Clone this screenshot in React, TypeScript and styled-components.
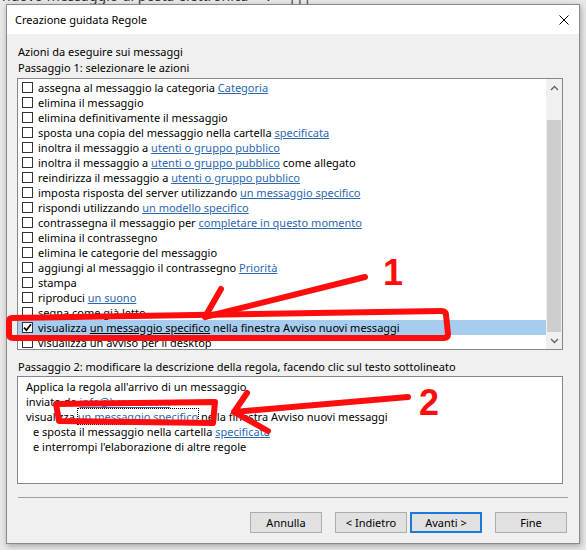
import React from 'react';
import styled, { createGlobalStyle } from 'styled-components';

type Part = string | { link: string };

interface Action {
  parts: Part[];
  checked?: boolean;
  selected?: boolean;
}

const actions: Action[] = [
  { parts: ['assegna al messaggio la categoria ', { link: 'Categoria' }] },
  { parts: ['elimina il messaggio'] },
  { parts: ['elimina definitivamente il messaggio'] },
  { parts: ['sposta una copia del messaggio nella cartella ', { link: 'specificata' }] },
  { parts: ['inoltra il messaggio a ', { link: 'utenti o gruppo pubblico' }] },
  { parts: ['inoltra il messaggio a ', { link: 'utenti o gruppo pubblico' }, ' come allegato'] },
  { parts: ['reindirizza il messaggio a ', { link: 'utenti o gruppo pubblico' }] },
  { parts: ['imposta risposta del server utilizzando ', { link: 'un messaggio specifico' }] },
  { parts: ['rispondi utilizzando ', { link: 'un modello specifico' }] },
  { parts: ['contrassegna il messaggio per ', { link: 'completare in questo momento' }] },
  { parts: ['elimina il contrassegno'] },
  { parts: ['elimina le categorie del messaggio'] },
  { parts: ['aggiungi al messaggio il contrassegno ', { link: 'Priorità' }] },
  { parts: ['stampa'] },
  { parts: ['riproduci ', { link: 'un suono' }] },
  { parts: ['segna come già letto'] },
  {
    parts: ['visualizza ', { link: 'un messaggio specifico' }, ' nella finestra Avviso nuovi messaggi'],
    checked: true,
    selected: true,
  },
  { parts: ['visualizza un avviso per il desktop'] },
];

const GlobalStyle = createGlobalStyle`
  html, body {
    margin: 0;
    padding: 0;
  }
  body {
    font-family: 'Noto Sans', 'DejaVu Sans', sans-serif;
    font-size: 11px;
    color: #000;
  }
`;

const Check = () => (
  <svg width="9" height="9" viewBox="0 0 9 9">
    <path d="M1 4.6 L3.4 7.2 L8 1.2" fill="none" stroke="#000" strokeWidth="1.7" />
  </svg>
);

const Chevron = ({ down }: { down?: boolean }) => (
  <svg width="9" height="6" viewBox="0 0 9 6">
    <path
      d={down ? 'M1 1 L4.5 4.5 L8 1' : 'M1 5 L4.5 1.5 L8 5'}
      fill="none"
      stroke="#606060"
      strokeWidth="1.3"
    />
  </svg>
);

const renderParts = (parts: Part[], plain?: boolean) =>
  parts.map((p, i) =>
    typeof p === 'string' ? (
      <React.Fragment key={i}>{p}</React.Fragment>
    ) : (
      <Link key={i} $plain={plain}>
        {p.link}
      </Link>
    ),
  );

export default function App() {
  return (
    <>
      <GlobalStyle />
      <Desktop>
        <Ribbon>
          <RibbonText>nuovo messaggio di posta elettronica</RibbonText>
          <RibbonText>⌄</RibbonText>
          <RibbonText>|||</RibbonText>
        </Ribbon>
        <WindowArea>
          <Dialog>
            <TitleBar>
              <Title>Creazione guidata Regole</Title>
              <svg width="10" height="10" viewBox="0 0 10 10">
                <path d="M0.5 0.5 L9.5 9.5 M9.5 0.5 L0.5 9.5" stroke="#000" strokeWidth="1" />
              </svg>
            </TitleBar>
            <Body>
              <Label>Azioni da eseguire sui messaggi</Label>
              <Label>Passaggio 1: selezionare le azioni</Label>
              <ListBox>
                <Rows>
                  {actions.map((a, i) => (
                    <Row key={i} $selected={a.selected}>
                      <Checkbox>{a.checked && <Check />}</Checkbox>
                      <RowText>{renderParts(a.parts, a.selected)}</RowText>
                    </Row>
                  ))}
                </Rows>
                <ScrollBar>
                  <ScrollArrow>
                    <Chevron />
                  </ScrollArrow>
                  <Track>
                    <Thumb />
                  </Track>
                  <ScrollArrow>
                    <Chevron down />
                  </ScrollArrow>
                </ScrollBar>
              </ListBox>
              <StepLabel>
                Passaggio 2: modificare la descrizione della regola, facendo clic sul testo sottolineato
              </StepLabel>
              <DescBox>
                <DescLine>Applica la regola all'arrivo di un messaggio</DescLine>
                <DescLine>
                  inviato da <Link>info@braosa.com</Link>
                </DescLine>
                <DescLine>
                  visualizza <FocusLink>un messaggio specifico</FocusLink> nella finestra Avviso nuovi messaggi
                </DescLine>
                <DescLine $indent>
                  e sposta il messaggio nella cartella <Link>specificata</Link>
                </DescLine>
                <DescLine $indent>e interrompi l'elaborazione di altre regole</DescLine>
              </DescBox>
              <Separator />
              <ButtonRow>
                <Button>Annulla</Button>
                <Button $gap={13}>&lt; Indietro</Button>
                <Button $gap={3} $focused>
                  Avanti &gt;
                </Button>
                <Button $gap={13}>Fine</Button>
              </ButtonRow>
            </Body>
          </Dialog>
        </WindowArea>
        <Annotations width="586" height="550" viewBox="0 0 586 550">
          <g fill="none" stroke="#ff0d0d" strokeWidth="6" strokeLinecap="round" strokeLinejoin="round">
            <path d="M12 318 L441 311 Q446 311 446 315 L448 334 Q448 338 444 338 L13 338 Q9 338 9 334 L9 322 Q9 318 12 318" />
            <path d="M365 277 L205 317 M205 317 L221 289" />
            <path d="M56 404 L215 402 L213 423 L59 421 Z" />
            <path d="M408 397 L234 412 M234 412 L247 393 M234 412 L268 431" />
          </g>
          <NumberMark x="383" y="285">1</NumberMark>
          <NumberMark x="419" y="415">2</NumberMark>
        </Annotations>
      </Desktop>
    </>
  );
}

const Desktop = styled.div`
  position: relative;
  width: 586px;
  height: 550px;
  overflow: hidden;
  background: #e8e8e8;
  display: flex;
  flex-direction: column;
`;

const Ribbon = styled.div`
  height: 4px;
  overflow: hidden;
  display: flex;
  gap: 14px;
  padding-left: 2px;
`;

const RibbonText = styled.span`
  margin-top: -12px;
  font-size: 14px;
  line-height: 16px;
  color: #333;
  white-space: nowrap;
`;

const WindowArea = styled.div`
  flex: 1;
  padding-left: 6px;
`;

const Dialog = styled.div`
  width: 574px;
  height: 540px;
  box-sizing: border-box;
  border: 1px solid #8a8a8a;
  background: #f0f0f0;
  display: flex;
  flex-direction: column;
  box-shadow: 1px 2px 6px rgba(0, 0, 0, 0.3);
`;

const TitleBar = styled.div`
  height: 29px;
  background: #fff;
  display: flex;
  align-items: center;
  justify-content: space-between;
  padding: 0 10px 0 8px;
`;

const Title = styled.span`
  font-size: 11px;
`;

const Body = styled.div`
  flex: 1;
  padding: 10px 0 0 10px;
  display: flex;
  flex-direction: column;
`;

const Label = styled.div`
  height: 16px;
  line-height: 16px;
  padding-left: 1px;
  white-space: nowrap;
`;

const StepLabel = styled(Label)`
  margin-top: 9px;
`;

const ListBox = styled.div`
  margin-top: 2px;
  width: 546px;
  height: 272px;
  box-sizing: border-box;
  border: 1px solid #828790;
  background: #fff;
  display: flex;
`;

const Rows = styled.div`
  flex: 1;
  padding-top: 1px;
  overflow: hidden;
`;

const Row = styled.div<{ $selected?: boolean }>`
  height: 15px;
  display: flex;
  align-items: center;
  padding-left: 4px;
  background: ${(p) => (p.$selected ? '#a6cdf0' : 'transparent')};
`;

const Checkbox = styled.span`
  width: 11px;
  height: 11px;
  box-sizing: border-box;
  border: 1px solid #333;
  background: #fff;
  margin-right: 5px;
  display: flex;
  align-items: center;
  justify-content: center;
  flex-shrink: 0;
`;

const RowText = styled.span`
  line-height: 15px;
  white-space: nowrap;
`;

const Link = styled.span<{ $plain?: boolean }>`
  color: ${(p) => (p.$plain ? '#000' : '#2d67b0')};
  text-decoration: underline;
`;

const FocusLink = styled(Link)`
  outline: 1px dotted #000;
  outline-offset: 0;
`;

const ScrollBar = styled.div`
  width: 16px;
  background: #f0f0f0;
  display: flex;
  flex-direction: column;
`;

const ScrollArrow = styled.div`
  height: 17px;
  display: flex;
  align-items: center;
  justify-content: center;
`;

const Track = styled.div`
  flex: 1;
  display: flex;
  flex-direction: column;
  justify-content: flex-end;
`;

const Thumb = styled.div`
  height: 212px;
  margin: 0 1px;
  background: #cdcdcd;
`;

const DescBox = styled.div`
  margin-top: 1px;
  width: 546px;
  height: 108px;
  box-sizing: border-box;
  border: 1px solid #828790;
  background: #fff;
  padding: 2px 0 0 8px;
`;

const DescLine = styled.div<{ $indent?: boolean }>`
  height: 15px;
  line-height: 15px;
  white-space: nowrap;
  padding-left: ${(p) => (p.$indent ? '7px' : '0')};
`;

const Separator = styled.div`
  margin-top: 13px;
  margin-left: 1px;
  width: 550px;
  height: 1px;
  background: #a0a0a0;
`;

const ButtonRow = styled.div`
  margin-top: 14px;
  width: 550px;
  display: flex;
  justify-content: flex-end;
`;

const Button = styled.button<{ $gap?: number; $focused?: boolean }>`
  width: 72px;
  height: 21px;
  box-sizing: border-box;
  margin: 0 0 0 ${(p) => p.$gap ?? 0}px;
  padding: 0;
  border: ${(p) => (p.$focused ? '2px solid #1a7ad6' : '1px solid #adadad')};
  background: #e1e1e1;
  font-family: inherit;
  font-size: 11px;
  color: #000;
`;

const Annotations = styled.svg`
  position: absolute;
  left: 0;
  top: 0;
  pointer-events: none;
`;

const NumberMark = styled.text`
  font-family: 'Liberation Sans', Arial, sans-serif;
  font-weight: bold;
  font-size: 36px;
  fill: #ff0d0d;
`;
